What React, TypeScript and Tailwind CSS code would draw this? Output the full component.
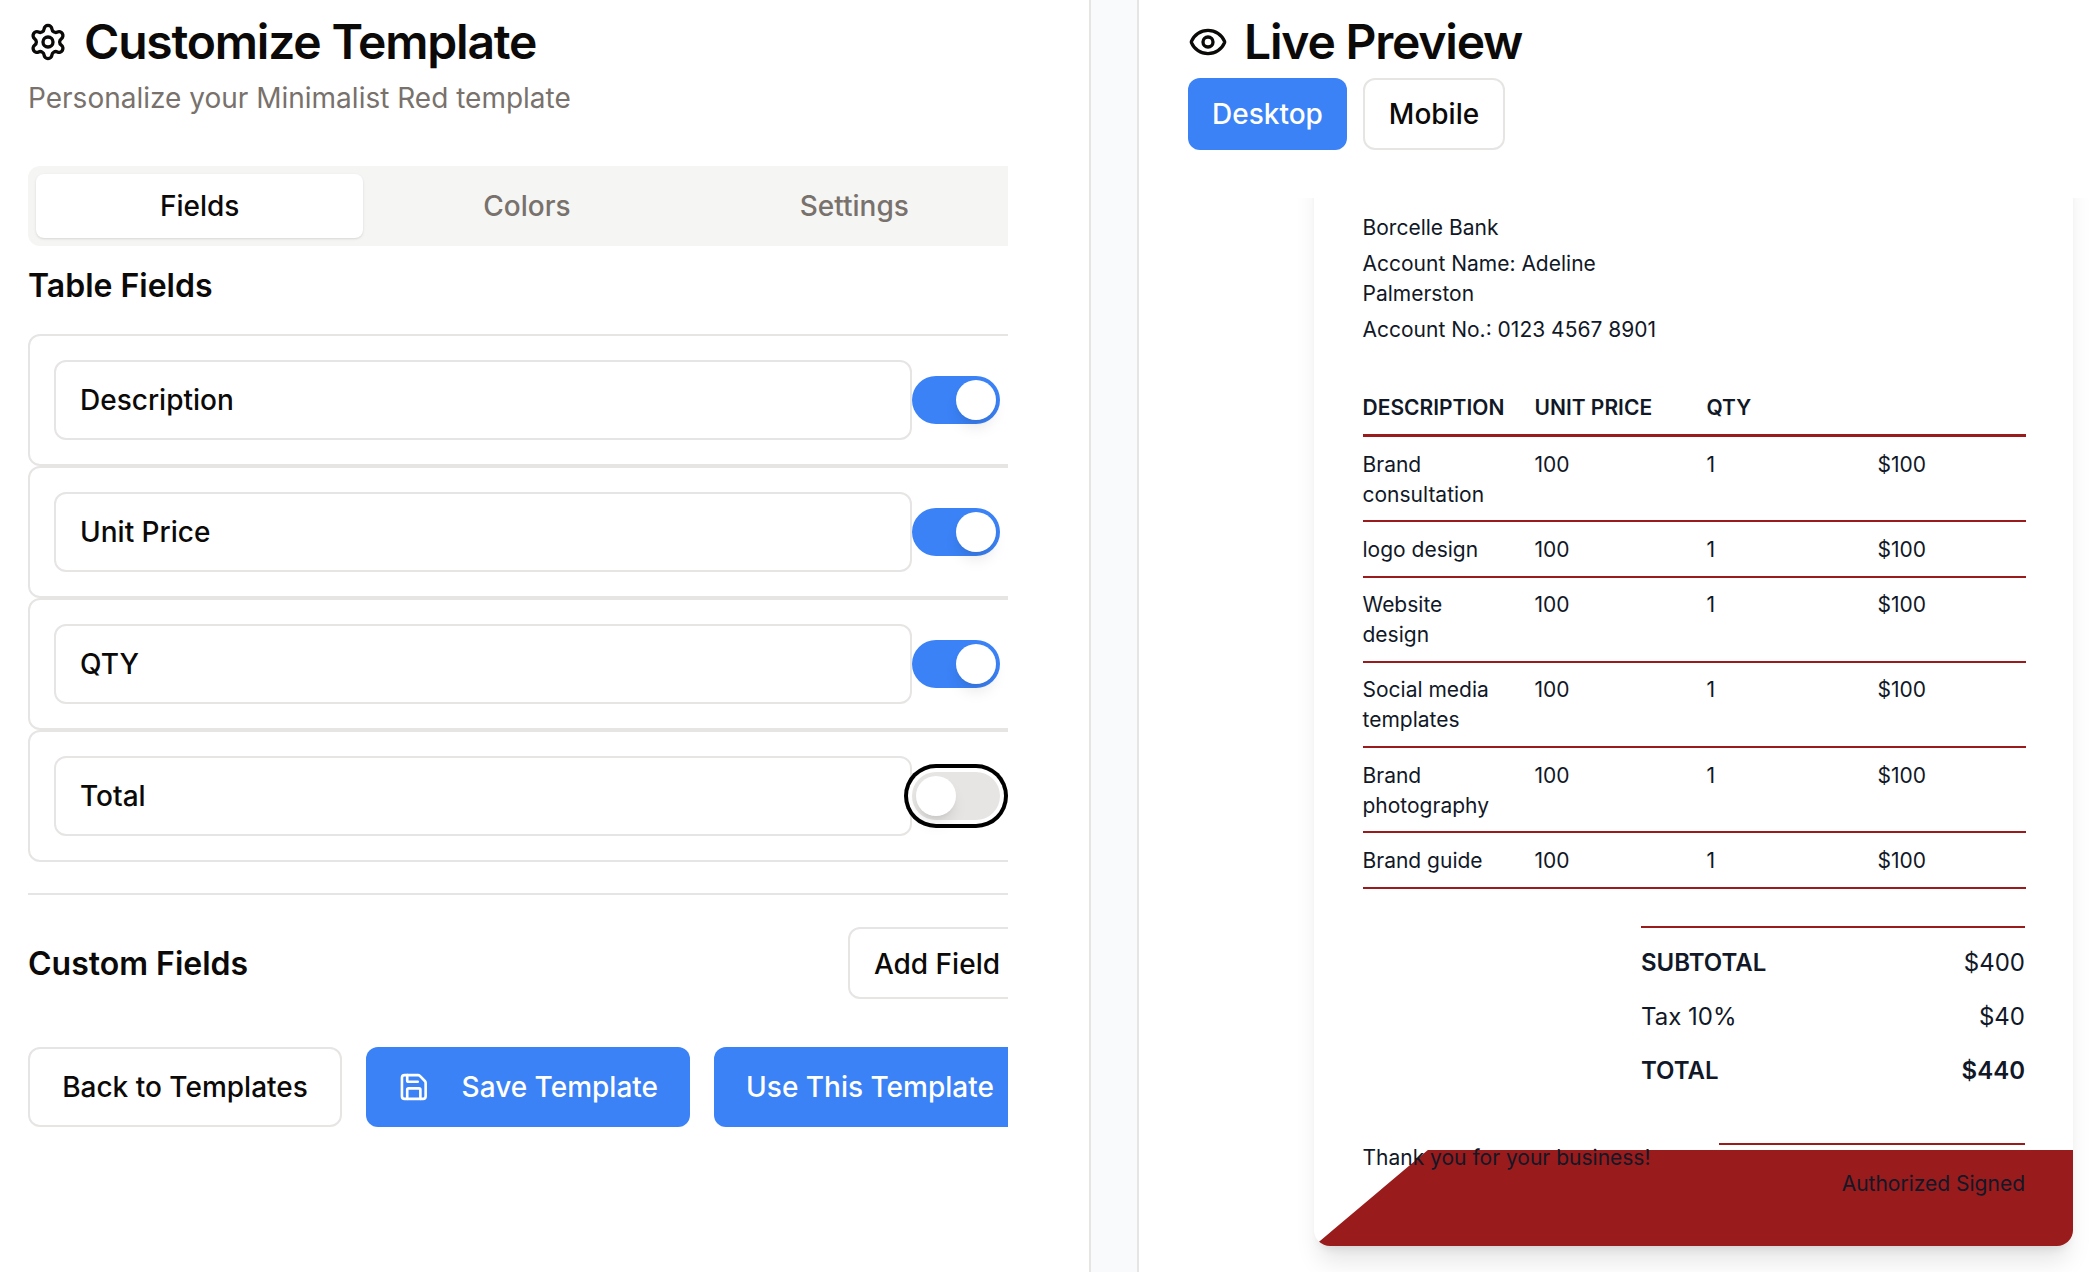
import { Eye, Save, Settings } from "lucide-react";

const fields = [
  { label: "Description", on: true },
  { label: "Unit Price", on: true },
  { label: "QTY", on: true },
  { label: "Total", on: false, focused: true },
];

const rows = [
  "Brand consultation",
  "logo design",
  "Website design",
  "Social media templates",
  "Brand photography",
  "Brand guide",
];

function Toggle({ on, focused }: { on: boolean; focused?: boolean }) {
  return (
    <button
      className={`flex h-12 w-[88px] shrink-0 items-center rounded-full p-1 ${on ? "justify-end bg-[#3b82f6]" : "justify-start bg-[#e7e5e4]"} ${focused ? "ring-4 ring-black ring-offset-4" : ""}`}
    >
      <span className="block h-10 w-10 rounded-full bg-white shadow-lg" />
    </button>
  );
}

export default function App() {
  return (
    <div className="flex h-[1272px] w-[2090px] overflow-hidden bg-white font-['Inter',sans-serif] text-[#0c0a09]">
      {/* Customize panel */}
      <div className="w-[1089px] shrink-0 pl-7 pr-[81px] pt-[18px]">
        <div className="flex h-12 items-center gap-4">
          <Settings size={40} />
          <h1 className="whitespace-nowrap text-[48px] font-semibold leading-[48px] tracking-[-1.2px]">Customize Template</h1>
        </div>
        <p className="mt-3 text-[28px] leading-10 text-[#78716c]">Personalize your Minimalist Red template</p>

        <div className="mt-12 overflow-hidden">
          <div className="w-[998px]">
            <div className="grid h-20 grid-cols-3 rounded-xl bg-[#f5f5f4] p-2 text-[28px] text-[#78716c]">
              <div className="flex items-center justify-center rounded-lg bg-white font-medium text-[#0c0a09] shadow-sm">Fields</div>
              <div className="flex items-center justify-center font-medium">Colors</div>
              <div className="flex items-center justify-center font-medium">Settings</div>
            </div>

            <h2 className="mt-5 text-[32px] font-semibold leading-10">Table Fields</h2>
            <div className="mt-7">
              {fields.map((f) => (
                <div key={f.label} className="flex items-center rounded-xl border-2 border-[#e7e5e4] p-6">
                  <div className="flex h-20 w-[858px] items-center rounded-xl border-2 border-[#e7e5e4] px-6 text-[28px] font-medium">
                    {f.label}
                  </div>
                  <Toggle on={f.on} focused={f.focused} />
                </div>
              ))}
            </div>

            <div className="mt-[31px] h-0.5 bg-[#e7e5e4]" />

            <div className="mt-8 flex items-center justify-between">
              <h2 className="pt-px text-[32px] font-semibold leading-10">Custom Fields</h2>
              <button className="h-[72px] rounded-xl border-2 border-[#e7e5e4] px-6 pt-px text-[28px] font-medium">Add Field</button>
            </div>

            <div className="mt-12 flex gap-6 text-[28px] font-medium">
              <button className="h-20 w-[314px] rounded-xl border-2 border-[#e7e5e4]">Back to Templates</button>
              <button className="flex h-20 w-[324px] items-center gap-8 whitespace-nowrap rounded-xl bg-[#3b82f6] px-8 text-white">
                <Save size={32} />
                Save Template
              </button>
              <button className="h-20 flex-1 whitespace-nowrap rounded-xl bg-[#3b82f6] text-white">Use This Template</button>
            </div>
          </div>
        </div>
      </div>

      {/* Gutter */}
      <div className="w-[50px] shrink-0 border-x-2 border-[#e7e5e4] bg-[#f9fafb]" />

      {/* Preview panel */}
      <div className="flex min-w-0 flex-1 flex-col pt-[18px]">
        <div className="pl-[49px]">
          <div className="flex h-12 items-center gap-4">
            <Eye size={40} />
            <h1 className="text-[48px] font-semibold leading-[48px] tracking-[-1.2px]">Live Preview</h1>
          </div>
          <div className="mt-3 flex gap-4 text-[28px] font-medium">
            <button className="h-[72px] w-[159px] rounded-xl bg-[#3b82f6] text-white">Desktop</button>
            <button className="h-[72px] w-[142px] rounded-xl border-2 border-[#e7e5e4]">Mobile</button>
          </div>
        </div>

        {/* invoice is scrolled, its top is cut off by this box */}
        <div className="mt-12 flex-1 overflow-hidden pb-6 pl-[175px] pr-[17px]">
          <div className="relative -mt-10 h-[1088px] overflow-hidden rounded-b-2xl bg-white pl-[48.5px] pr-[48px] pt-[55px] text-[21px] leading-[30px] text-[#111827] shadow-xl">
            <div className="absolute bottom-0 left-0 h-[96px] w-full bg-[#991b1b] [clip-path:polygon(15%_0,100%_0,100%_100%,0_100%)]" />

            <div className="relative w-[340px]">
              <p className="mb-1.5">Borcelle Bank</p>
              <p className="mb-1.5">Account Name: Adeline Palmerston</p>
              <p>Account No.: 0123 4567 8901</p>
            </div>

            <div className="relative mt-12 w-[663px]">
              <div className="grid grid-cols-[172px_172px_171px_148px] border-b-[3px] border-[#991b1b] pb-[11px] font-semibold">
                <div>DESCRIPTION</div>
                <div>UNIT PRICE</div>
                <div>QTY</div>
                <div />
              </div>
              {rows.map((name) => (
                <div key={name} className="grid grid-cols-[172px_172px_171px_148px] border-b-2 border-[#991b1b] pb-[10.65px] pt-[12.65px]">
                  <div className="pr-8">{name}</div>
                  <div>100</div>
                  <div>1</div>
                  <div>$100</div>
                </div>
              ))}
            </div>

            <div className="relative ml-auto mt-[37px] w-[384px] border-t-2 border-[#991b1b] pt-[8.5px] text-[24px] leading-[54px]">
              <div className="flex justify-between font-semibold"><span>SUBTOTAL</span><span className="font-normal">$400</span></div>
              <div className="flex justify-between"><span>Tax 10%</span><span>$40</span></div>
              <div className="flex justify-between font-semibold"><span>TOTAL</span><span>$440</span></div>
            </div>

            <div className="relative mt-[45px] flex justify-between">
              <p>Thank you for your business!</p>
              <div className="w-[306px] border-t-2 border-[#991b1b] pt-[24px] text-right">Authorized Signed</div>
            </div>
          </div>
        </div>
      </div>
    </div>
  );
}
